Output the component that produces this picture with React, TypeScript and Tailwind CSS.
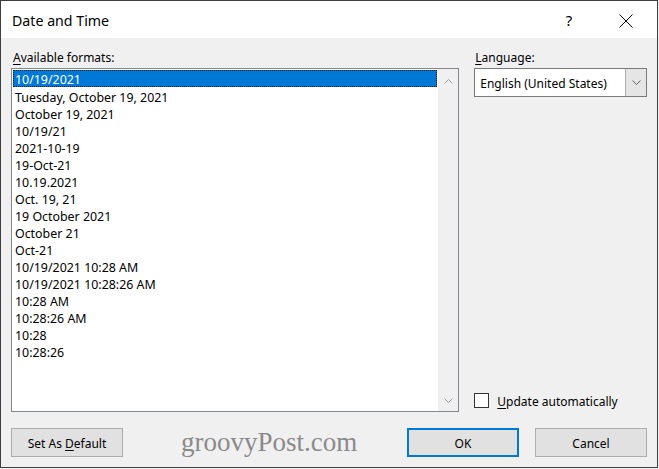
import React from "react";

const items = [
  "10/19/2021",
  "Tuesday, October 19, 2021",
  "October 19, 2021",
  "10/19/21",
  "2021-10-19",
  "19-Oct-21",
  "10.19.2021",
  "Oct. 19, 21",
  "19 October 2021",
  "October 21",
  "Oct-21",
  "10/19/2021 10:28 AM",
  "10/19/2021 10:28:26 AM",
  "10:28 AM",
  "10:28:26 AM",
  "10:28",
  "10:28:26",
];

function Chevron({ up, color = "#a0a0a0" }: { up?: boolean; color?: string }) {
  return (
    <svg width="9" height="5" viewBox="0 0 9 5">
      <path
        d={up ? "M0.5 4.5 L4.5 0.5 L8.5 4.5" : "M0.5 0.5 L4.5 4.5 L8.5 0.5"}
        fill="none"
        stroke={color}
        strokeWidth="1"
      />
    </svg>
  );
}

export default function App() {
  return (
    <div className="w-[659px] h-[469px] bg-[#f0f0f0] font-['Noto_Sans',sans-serif]">
      <div className="w-[658px] h-[468px] border border-[#3f3f3f] flex flex-col bg-[#f0f0f0] text-black text-[12px] leading-[17px]">
        {/* Title bar */}
        <div className="h-[38px] bg-white flex items-center pl-[11px] pr-[24px]">
          <div className="text-[14.2px] flex-1 pt-[1px]">Date and Time</div>
          <div className="text-[15px] w-[12px] text-center mr-[44px] pt-[1px]">?</div>
          <svg width="14" height="14" viewBox="0 0 14 14" className="mt-[2px]">
            <path d="M0.5 0.5 L13.5 13.5 M13.5 0.5 L0.5 13.5" stroke="#000" strokeWidth="1" />
          </svg>
        </div>

        {/* Body */}
        <div className="flex-1 flex flex-col px-[10px] pt-[9px] pb-[10px]">
          <div className="flex flex-1 gap-[15px]">
            {/* Left column */}
            <div className="w-[449px] flex flex-col">
              <div className="h-[18px] pl-[2px] pt-[2px] leading-[18px]">
                <span className="underline underline-offset-2">A</span>vailable formats:
              </div>
              <div className="mt-[3px] h-[344px] border border-[#828790] bg-white flex">
                <div className="flex-1 pt-[1px] pl-[1px] pr-[1px] text-[12.4px]">
                  {items.map((it, i) =>
                    i === 0 ? (
                      <div
                        key={i}
                        className="h-[17px] bg-[#0078d7] text-white pl-[1px] pt-[1px] border border-dotted border-[#1a1a1a] leading-[15px]"
                      >
                        {it}
                      </div>
                    ) : (
                      <div key={i} className="h-[17px] pl-[2px] pt-[2px] whitespace-nowrap">
                        {it}
                      </div>
                    )
                  )}
                </div>
                <div className="w-[20px] bg-[#f0f0f0] flex flex-col items-center justify-between pt-[10px] pb-[8px]">
                  <Chevron up />
                  <Chevron />
                </div>
              </div>
            </div>

            {/* Right column */}
            <div className="w-[173px] flex flex-col">
              <div className="h-[18px] pl-[1px] pt-[2px] leading-[18px]">
                <span className="underline underline-offset-2">L</span>anguage:
              </div>
              <div className="mt-[3px] h-[29px] border border-[#7a7a7a] bg-white flex">
                <div className="flex-1 flex items-center pl-[5px] pt-[2px]">English (United States)</div>
                <div className="w-[21px] bg-[#e5e5e5] border-l border-[#adadad] flex items-center justify-center">
                  <Chevron color="#606060" />
                </div>
              </div>
              <div className="flex-1" />
              <div className="flex items-center gap-[8px] mb-[2px]">
                <div className="w-[15px] h-[15px] border border-[#333333] bg-white" />
                <div className="pt-[2px]">
                  <span className="underline underline-offset-2">U</span>pdate automatically
                </div>
              </div>
            </div>
          </div>

          {/* Buttons */}
          <div className="mt-[16px] h-[29px] flex items-stretch">
            <div className="w-[112px] border border-[#adadad] bg-[#e1e1e1] flex items-center justify-center pt-[2px]">
              <span>
                Set As <span className="underline underline-offset-2">D</span>efault
              </span>
            </div>
            <div className="w-[240px] pl-[58px] flex items-center text-[27px] text-[#8a8a8a] font-['Liberation_Serif',serif]">
              groovyPost.com
            </div>
            <div className="flex-1" />
            <div className="w-[112px] border-2 border-[#0078d7] bg-[#e1e1e1] flex items-center justify-center pt-[2px]">
              OK
            </div>
            <div className="w-[16px]" />
            <div className="w-[112px] border border-[#adadad] bg-[#e1e1e1] flex items-center justify-center pt-[2px]">
              Cancel
            </div>
          </div>
        </div>
      </div>
    </div>
  );
}
